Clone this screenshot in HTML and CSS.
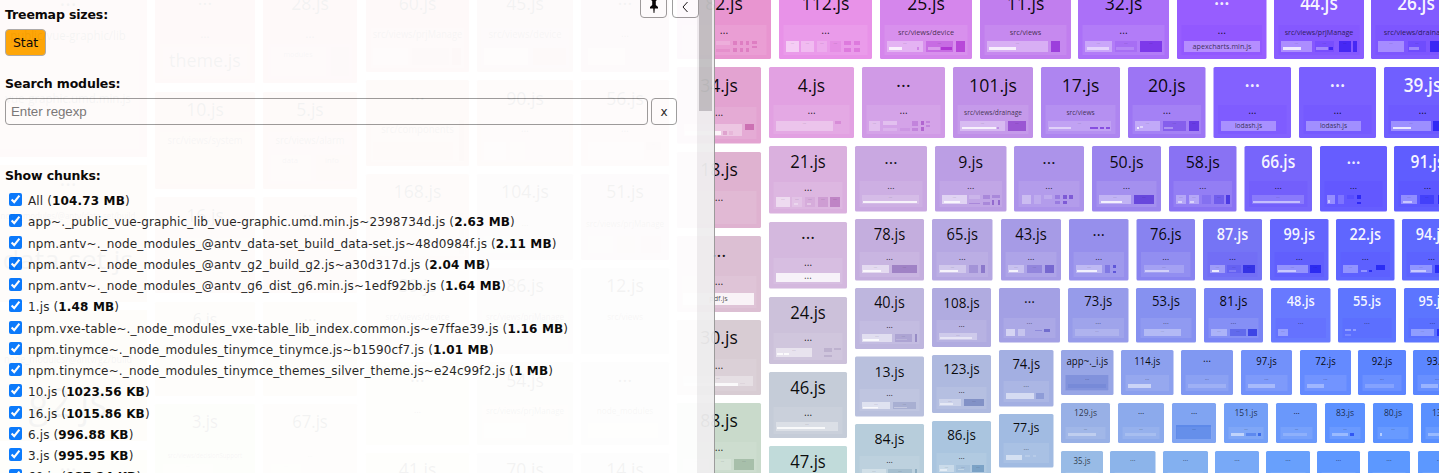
FILE: index.html
```html
<!DOCTYPE html>
<html lang="en">
<head>
<meta charset="utf-8">
<title>Bundle treemap</title>
<link rel="stylesheet" href="styles.css">
</head>
<body>
<svg class="treemap" id="treemap" width="1439" height="473" viewBox="0 0 1439 473"></svg>
<aside class="sidebar">
  <div class="toolbar">
    <button class="btn icon-btn" aria-label="Pin"><svg width="10" height="15" viewBox="0 0 10 15"><path d="M2.4 0h5.2v1.4l-.8.7v4l2.2 2v1.3H5.8L5.4 14h-.8l-.4-4.600H1V8.100l2.200-2v-4l-.8-.7z" fill="#000"/></svg></button>
    <button class="btn icon-btn" aria-label="Hide"><svg width="8" height="12" viewBox="0 0 8 12"><path d="M5.500 1 1 6 5.500 11" fill="none" stroke="#111" stroke-width="1"/></svg></button>
  </div>
  <div class="content">
    <h2 class="heading">Treemap sizes:</h2>
    <button class="btn active">Stat</button>
    <h2 class="heading search-heading">Search modules:</h2>
    <div class="search"><input class="query" type="text" placeholder="Enter regexp"><button class="btn clear">x</button></div>
    <h2 class="heading chunk-heading">Show chunks:</h2>
    <div class="chunks" id="chunks"></div>
  </div>
  <div class="scrollbar"><div class="thumb"></div></div>
</aside>
<script src="app.js"></script>
</body>
</html>
```

FILE: styles.css
```css
body { margin: 0; height: 473px; overflow: hidden; background: #fff; position: relative; }
.treemap { display: block; font-family: "Open Sans", sans-serif; }
.treemap text { text-anchor: middle; }
.sidebar {
  position: absolute; left: 0; top: 0; width: 715px; height: 473px;
  box-sizing: border-box; border-right: 1px solid #999; background: #fff;
  opacity: .95; overflow: hidden; display: flex;
  font: 12px "DejaVu Sans", Verdana, sans-serif; color: #000;
}
.content { flex: 1; padding: 6px 20px 0 5px; min-width: 0; }
.heading { margin: 0; font-size: 12.500px; line-height: 17px; font-weight: bold; letter-spacing: -.14px; }
.btn {
  box-sizing: border-box; height: 27px; padding: 0 7px; border: 1px solid #999;
  border-radius: 4px; background: #fff; font: 12px "DejaVu Sans", Verdana, sans-serif; color: #000;
}
.active { display: block; width: 41px; margin-top: 6px; background: #ffa500; border-color: #aaa; font-size: 12.500px; letter-spacing: -.1px; padding: 0; }
.search-heading { margin-top: 19px; }
.search { display: flex; gap: 3px; margin-top: 6px; }
.query {
  box-sizing: border-box; width: 643px; height: 27px; padding: 0 5px; border: 1px solid #999;
  border-radius: 4px; background: transparent; font: 13.333px "Liberation Sans", Arial, sans-serif; letter-spacing: -.05px;
}
.clear { width: 26px; padding: 0; color: #222; }
.chunk-heading { margin-top: 42px; }
.chunks { display: flex; flex-direction: column; margin-top: 6px; }
.chunk { display: flex; align-items: center; height: 21.250px; padding-left: 4px; white-space: pre; line-height: 16px; letter-spacing: .135px; color: #1c1c1c; }
.chunk input { margin: 0 6px 2px 0; width: 13px; height: 13px; flex: none; }
.chunk span { padding-top: 1px; }
.chunk b { letter-spacing: .15px; color: #000; }
.toolbar { position: absolute; left: 640px; top: -9px; display: flex; gap: 5px; }
.icon-btn { width: 27px; padding: 4px 0 0; display: flex; align-items: center; justify-content: center; }
.scrollbar { width: 17px; background: #efeeef; display: flex; justify-content: center; }
.thumb { width: 13px; height: 111px; background: #c1bfc1; }
```

FILE: app.js
```js
const NS = 'http://www.w3.org/2000/svg';
const svg = document.getElementById('treemap');

function el(name, attrs, content) {
  const node = document.createElementNS(NS, name);
  for (const key in attrs) node.setAttribute(key, attrs[key]);
  if (content) node.textContent = content;
  svg.appendChild(node);
}

function labelWidth(text) {
  let w = 0;
  for (const ch of text) w += /[0-9]/.test(ch) ? .539 : /[.jil\/]/.test(ch) ? .24 : ch === 's' ? .42 : ch === 'm' ? .86 : .53;
  return w;
}

function label(x, y, size, text, fill, opacity) {
  if (!text) return;
  const a = { x, y, 'font-size': size, fill, 'fill-opacity': opacity };
  if (fill === '#fff') a['font-weight'] = 600;
  if (text !== '…') {
    a.textLength = labelWidth(text) * size;
    a.lengthAdjust = 'spacingAndGlyphs';
  }
  el('text', a, text);
}

function accent(color) {
  const c = [1, 3, 5].map(i => parseInt(color.slice(i, i + 2), 16));
  return 'rgb(' + c.map(v => Math.round(Math.max(0, 255 - (255 - v) * 2) * .92)) + ')';
}

const light = { l: .17, m: .32, n: .5, h: .8 };
const dark = { a: .11, b: .27, c: .54 };

// Rows: y1, y2, box top, box bottom, title baseline, title size, group y, group size, cell y, cell height
const R = {
  r1: [-30, 59, 25, 55, 10.3, 19, 33, 11, 41, 11],
  r2: [67, 138, 105, 134, 91.5, 19, 113, 10.5, 121, 10],
  g2: [67, 143.5, 107, 139, 92, 19, 115, 10.5, 124, 12],
  r3: [146, 211.5, 181, 207, 168, 17.2, 188.500, 9.5, 195, 9],
  g3: [152, 228, 191, 224, 175.7, 19, 200, 11, 0, 0],
  h3: [146, 213.5, 182, 209, 168, 18, 190, 10.5, 197, 10],
  r4: [219, 280.5, 252, 277, 239.7, 15.9, 259, 9, 265, 8],
  g4: [236, 312, 276, 308, 262, 19, 284, 11, 293, 12],
  h4: [222, 288.5, 258, 284, 244, 18, 265, 10.5, 273, 9],
  g5: [320, 395, 359, 391, 343.7, 19, 368, 11, 376, 10],
  h5: [297, 364, 333, 360, 319, 18, 340, 10.5, 348, 9],
  g6: [403, 490, 442, 472, 426.7, 19, 450, 11, 459, 11],
  h6: [372, 438, 407, 434, 394, 18, 415, 10.5, 422, 9],
  h7: [446, 510, 480, 500, 468, 18, 0, 0, 0, 0],
  i5: [288, 349, 321, 344, 308, 15.5, 327.500, 8.5, 334, 8],
  i6: [356.5, 416.5, 389, 411, 376.500, 15.2, 395, 8.5, 402, 7],
  i7: [424, 482, 456, 478, 443.7, 15.2, 462.5, 8.5, 469, 7],
  j5: [288, 347, 320, 342, 308.3, 14.5, 326.5, 8, 333, 7],
  j6: [355, 413, 387, 409, 374, 14.5, 392.5, 8, 399, 7],
  j7: [421, 480, 453, 474, 439.7, 14.5, 458, 8, 465, 7],
  k5: [288, 342.5, 318, 338, 306.3, 14.1, 323.5, 7.5, 329, 7],
  k6: [350, 406.5, 381, 402, 369, 14, 386.5, 7.5, 393, 6],
  k7: [414, 467.5, 443, 463, 432.3, 13.4, 449, 7, 455, 5],
  r6: [350, 395, 375, 391, 365, 10.3, 379.5, 5.5, 384, 4],
  r7: [403, 443, 427, 439, 416.3, 9.2, 429.5, 4.5, 433, 3],
  r8: [451, 490, 472, 480, 464, 8.5, 0, 0, 0, 0],
  b1: [-20, 83, 44, 79, 10.3, 19, 37, 12, 47, 29],
  b2: [92, 189, 132, 184, 116, 19, 142, 10, 155, 26],
  b3: [197, 293, 238, 288, 222, 19, 248, 10, 258, 26],
  b4: [302, 396, 342, 391, 325, 17, 354, 9, 362, 24],
  b5: [404, 490, 446, 484, 428, 18, 456, 6.500, 464, 9],
  d1: [-20, 72, 28, 68, 10.3, 19, 36, 10.300, 48, 17],
  d2: [80, 166, 120, 162, 104.5, 19, 131, 10, 142, 18],
  d3: [174, 260, 215, 256, 198, 19, 225, 9, 236, 17],
  d4: [268, 354, 310, 350, 292, 19, 318, 9, 330, 17],
  d5: [362, 445, 405, 440, 387, 19, 412, 9, 423, 15],
  d6: [453, 520, 490, 500, 476, 19, 0, 0, 0, 0]
};

const C = '…';
// Tile: row, x1, x2, colour, title, group, cells [x, width, tone, y?, height?], white title?
const tiles = [
  ['b1', 155, 255, '#f0948f', C, C, [[163, 84, 'l', 47, 29]]], ['b1', 263, 357, '#ee8f98', '28.js', C, [[271, 55, 'l'], [331, 18, 'a']]],
  ['b2', 155, 255, '#f4ac92', '10.js', 'src/views/system', []], ['b2', 263, 357, '#f2a598', '5.js', 'src/views/alarm', [[271, 40, 'l'], [316, 34, 'a']]],
  ['b3', 155, 255, '#f5c1a2', '16.js', 'src/views', []], ['b3', 263, 357, '#f0bca2', C, C, []],
  ['b4', 155, 255, '#eee2b4', '6.js', C, []], ['b4', 263, 357, '#efe2be', C, C, []],
  ['b5', 155, 255, '#e9edbe', '3.js', 'src/views/decisionSupport', [[163, 50, 'l']]], ['b5', 263, 357, '#eeeac8', '67.js', C, [[271, 30, 'l']]],
  ['d1', 366, 469, '#ee9798', '60.js', 'src/views/prjManage', [[373, 35, 'm'], [412, 37, 'a'], [452, 9, 'b']]],
  ['d1', 477, 573, '#eaa0af', '45.js', 'src/views/device', [[484, 44, 'm'], [533, 33, 'b']]],
  ['d1', 581, 669, '#eaa2b7', C, C, [[588, 37, 'm'], [630, 33, 'a']]],
  ['d2', 366, 469, '#f0aa96', C, 'src/components', [[373, 80, 'a'], [459, 5, 'b', 120, 41]]],
  ['d2', 477, 573, '#ecb4ae', '90.js', C, [[484, 22, 'm'], [510, 15, 'l']]],
  ['d2', 581, 669, '#ecb2ba', '56.js', C, [[588, 56, 'm'], [646, 15, 'b', 142, 8]]],
  ['d3', 366, 469, '#f0c3b0', '168.js', C, [[373, 60, 'l'], [459, 5, 'b', 213, 41]]],
  ['d3', 477, 573, '#e5cfc4', '104.js', C, [[484, 35, 'l']]],
  ['d3', 581, 669, '#e5bec4', '51.js', 'src/views/prjManage', [[588, 25, 'l'], [617, 18, 'a'], [641, 20, 'b']]],
  ['d4', 366, 469, '#eed8c6', '39.js', 'src/views/device', []], ['d4', 477, 573, '#e4d6ca', '86.js', 'src/views/prjManage', [[484, 22, 'l']]], ['d4', 581, 669, '#e6dada', '12.js', 'src/views', []],
  ['d5', 366, 469, '#f3efcc', C, C, []], ['d5', 477, 573, '#ebe6d2', '54.js', 'src/views/prjManage', [[484, 42, 'm']]], ['d5', 581, 669, '#eae6dc', C, 'node_modules', [[588, 70, 'm']]],
  ['d6', 366, 469, '#edf0ce', '41.js'], ['d6', 477, 573, '#e8e6d8', '70.js'], ['d6', 581, 669, '#e6e6de', '14.js'],

  ['r1', 677, 771, '#e895d0', '82.js', C, [[716, 14, 'l', 41, 4], [716, 14, 'a', 49, 3], [733, 4, 'b', 41, 4], [740, 3, 'b', 41, 4], [746, 3, 'b', 41, 4], [752, 5, 'b', 41, 3], [733, 4, 'b', 48, 4], [740, 3, 'b', 48, 4], [746, 3, 'b', 48, 4], [752, 5, 'b', 46, 2]]],
  ['r1', 779, 872, '#e892e8', '112.js', C, [[786, 13, 'n'], [801, 13, 'm'], [817, 10, 'l'], [830, 11, 'a'], [844, 7, 'b', 41, 4], [854, 6, 'b', 41, 4], [844, 7, 'b', 48, 4], [854, 6, 'b', 48, 4]]],
  ['r1', 880, 972, '#d586ec', '25.js', 'src/views/device', [[887, 36, 'm'], [889, 13, 'h', 47, 3], [917, 2, 'b', 47, 3], [926, 27, 'b'], [928, 12, 'm', 47, 3], [941, 11, 'c', 47, 3], [956, 9, 'c']]],
  ['r1', 980, 1071, '#c17eee', '11.js', 'src/views', [[987, 61, 'm'], [989, 27, 'h', 47, 3], [1051, 9, 'c']]],
  ['r1', 1078, 1169, '#ab70f8', '32.js', C, [[1085, 27, 'm'], [1087, 22, 'n', 47, 3], [1115, 22, 'a'], [1116, 18, 'l', 47, 3], [1140, 22, 'c']]],
  ['r1', 1177, 1266.5, '#975dff', C, C, [[1184, 76, 'm', 41, 11, 'apexcharts.min.js']], 1],
  ['r1', 1274, 1364, '#895dff', '44.js', 'src/views/prjManage', [[1281, 31, 'm'], [1283, 18, 'h', 47, 3], [1315, 19, 'a'], [1316, 12, 'm', 47, 3], [1329, 4, 'c', 47, 3], [1339, 12, 'c'], [1353, 4, 'c']], 1],
  ['r1', 1371, 1461, '#815bff', '26.js', 'src/views/drainage', [[1378, 26, 'm'], [1408, 18, 'a'], [1409, 10, 'm', 47, 3], [1430, 9, 'c']], 1],
  ['g2', 677, 761, '#e3a3d1', '34.js', C, [[684, 58, 'm'], [685, 36, 'h', 131, 4], [723, 4, 'b', 131, 4], [729, 4, 'a', 131, 4], [745, 9, 'c', 124, 6]]],
  ['r2', 769, 854, '#e2a1e2', '4.js', C, [[776, 57, 'm'], [835, 6, 'b', 121, 3]]],
  ['r2', 862, 945, '#d09ae6', C, C, [[869, 11, 'm'], [883, 14, 'm', 121, 4], [883, 14, 'l', 128, 3], [900, 10, 'a', 128, 3], [912, 6, 'b', 121, 5], [912, 6, 'b', 128, 3], [921, 3, 'c', 121, 4], [921, 3, 'c', 127, 4], [926, 4, 'b', 121, 2], [926, 4, 'b', 125, 2]]],
  ['r2', 953, 1033, '#c090e8', '101.js', 'src/views/drainage', [[960, 45, 'm'], [962, 34, 'h', 127, 2], [997, 2, 'b', 127, 2], [1008, 18, 'c']]],
  ['r2', 1041, 1120, '#ae85f0', '17.js', 'src/views', [[1048, 63, 'l'], [1049, 22, 'n', 127, 2], [1090, 8, 'c', 127, 2], [1100, 4, 'c', 127, 2], [1106, 4, 'c', 127, 2]]],
  ['r2', 1128, 1205.5, '#9c75f4', '20.js', C, [[1135, 25, 'm'], [1137, 2, 'h', 127, 2], [1140, 3, 'n', 126, 2], [1163, 23, 'b'], [1164, 9, 'm', 127, 2], [1189, 10, 'c']]],
  ['r2', 1213.5, 1291, '#8361ff', C, C, [[1221, 55, 'm', 121, 10, 'lodash.js']], 1],
  ['r2', 1299, 1376, '#795fff', C, C, [[1306, 55, 'm', 121, 10, 'lodash.js']], 1],
  ['r2', 1384, 1461, '#705fff', '39.js', C, [[1391, 40, 'm'], [1393, 18, 'h', 127, 2], [1433, 9, 'c']], 1],
  ['g3', 677, 761, '#dfb2d0', '18.js', C, []],
  ['h3', 769, 847, '#dab0de', '21.js', C, [[776, 14, 'n'], [792, 10, 'l'], [794, 4, 'm', 203, 2], [805, 10, 'a'], [807, 4, 'm', 203, 2], [818, 10, 'b'], [830, 10, 'c']]],
  ['r3', 855, 927, '#c9a8e1', C, C, [[862, 57, 'l'], [863, 54, 'h', 201, 2]]],
  ['r3', 935, 1006.5, '#bb9ee4', '9.js', C, [[942, 25, 'n'], [944, 16, 'h', 201, 2], [969, 11, 'l', 195, 4], [969, 11, 'b', 203, 1], [983, 7, 'b', 195, 4], [983, 7, 'b', 202, 3], [992, 8, 'b', 195, 3], [992, 2, 'c', 200, 5], [998, 2, 'c', 200, 5]]],
  ['r3', 1014, 1084, '#ac93ea', C, C, [[1022, 9, 'm'], [1034, 7, 'l'], [1044, 8, 'l', 195, 4], [1055, 5, 'b', 195, 4], [1063, 4, 'c', 195, 4], [1069, 4, 'c', 195, 4], [1055, 5, 'b', 201, 3], [1063, 4, 'c', 201, 3]]],
  ['r3', 1092, 1161, '#9b85ee', '50.js', C, [[1099, 32, 'm'], [1101, 21, 'h', 201, 2], [1134, 20, 'c']]],
  ['r3', 1169, 1236.5, '#8972f3', '58.js', C, [[1176, 10, 'm'], [1178, 4, 'n', 201, 2], [1189, 10, 'm'], [1190, 4, 'n', 201, 2], [1202, 9, 'a'], [1214, 10, 'b'], [1226, 4, 'c']]],
  ['r3', 1244.5, 1312, '#7765fb', '66.js', C, [[1252, 52, 'l'], [1253, 47, 'n', 201, 2]], 1],
  ['r3', 1320, 1387, '#665dff', C, C, [[1327, 8, 'm'], [1328, 2, 'n', 200, 3], [1338, 6, 'l'], [1347, 7, 'a', 195, 4], [1357, 4, 'c', 195, 4], [1357, 4, 'c', 202, 2]], 1],
  ['r3', 1394, 1461, '#5f5dff', '91.js', C, [[1401, 16, 'm'], [1403, 9, 'n', 201, 2], [1420, 14, 'b'], [1438, 5, 'c']], 1],
  ['g4', 677, 761, '#dcbfd3', C, C, [[683, 71, 'h', 293, 12, 'pdf.js']]],
  ['h4', 769, 847, '#d4b8de', C, C, [[776, 64, 'h', 273, 9, C]]],
  ['r4', 855, 924, '#c4aede', '78.js', C, [[862, 27, 'n'], [863, 18, 'h', 270, 2], [892, 25, 'c']]],
  ['r4', 932, 992.5, '#b5a7e2', '65.js', C, [[939, 27, 'm'], [940, 18, 'h', 270, 2], [969, 9, 'b'], [981, 4, 'c']]],
  ['r4', 1001, 1061, '#a69be6', '43.js', C, [[1008, 16, 'm'], [1009, 9, 'h', 270, 2], [1027, 15, 'b'], [1045, 9, 'c']]],
  ['r4', 1069, 1128.5, '#968fec', C, C, [[1076, 26, 'm'], [1077, 20, 'h', 270, 2], [1105, 5, 'b'], [1113, 3, 'c', 265, 3], [1113, 3, 'c', 271, 2]]],
  ['r4', 1136.5, 1195, '#8883f0', '76.js', C, [[1144, 40, 'l'], [1145, 24, 'n', 270, 2]]],
  ['r4', 1203, 1262, '#7574f5', '87.js', C, [[1210, 15, 'm'], [1212, 7, 'h', 270, 2], [1227, 14, 'a'], [1229, 7, 'l', 270, 2], [1243, 12, 'c']], 1],
  ['r4', 1270, 1328.5, '#6465fd', '99.js', C, [[1277, 31, 'm'], [1278, 18, 'n', 270, 2], [1310, 11, 'c']], 1],
  ['r4', 1336, 1394.5, '#5f66ff', '22.js', C, [[1343, 15, 'm'], [1361, 6, 'm', 270, 2], [1369, 3, 'c', 270, 2], [1376, 9, 'c', 265, 5]], 1],
  ['r4', 1402, 1461, '#5e69ff', '94.js', C, [[1410, 22, 'm'], [1411, 15, 'n', 270, 2], [1435, 4, 'c']], 1],
  ['g5', 677, 761, '#d8ccd3', '30.js', C, [[683, 70, 'm'], [684, 54, 'h', 383, 3], [740, 5, 'a', 383, 1]]],
  ['h5', 769, 847, '#ccc1da', '24.js', C, [[776, 36, 'n'], [777, 6, 'h', 353, 2], [784, 5, 'h', 353, 2], [824, 8, 'b', 348, 4], [834, 7, 'b', 348, 2], [824, 8, 'b', 355, 2]]],
  ['i5', 855, 924, '#beb6de', '40.js', C, [[862, 30, 'n'], [863, 16, 'h', 339, 2], [895, 17, 'b'], [896, 11, 'l', 339, 1], [915, 2, 'c']]],
  ['j5', 932, 991, '#b0abe0', '108.js', C, [[939, 38, 'm'], [940, 32, 'n', 337, 2]]],
  ['k5', 999, 1060, '#a3a0e4', C, C, [[1006, 9, 'n'], [1018, 7, 'm'], [1035, 7, 'b', 330, 1], [1044, 6, 'c', 329, 3]]],
  ['k5', 1068, 1128.5, '#969bea', '73.js', C, [[1075, 44, 'l']]],
  ['k5', 1136, 1196, '#8691f0', '53.js', C, [[1144, 37, 'm']]],
  ['k5', 1204, 1263, '#7984f5', '81.js', C, [[1211, 16, 'm'], [1230, 16, 'b'], [1248, 9, 'c']]],
  ['k5', 1271, 1330.5, '#6879ff', '48.js', C, [[1278, 10, 'm']], 1],
  ['k5', 1338, 1396, '#5e75ff', '55.js', C, [[1345, 6, 'm', 329, 2], [1353, 3, 'm', 329, 2], [1345, 6, 'l', 334, 2]], 1],
  ['k5', 1404, 1461, '#5c75ff', '95.js', C, [[1411, 23, 'm'], [1437, 4, 'c']], 1],
  ['g6', 677, 761, '#c9dacb', '88.js', C, [[683, 26, 'm'], [714, 17, 'l'], [734, 20, 'c']]],
  ['h6', 769, 847, '#c5ccd8', '46.js', C, [[776, 62, 'm'], [777, 48, 'h', 427, 2]]],
  ['h7', 769, 847, '#c1dbda', '47.js'],
  ['i6', 855, 924, '#b9c0dd', '13.js', C, [[862, 28, 'n'], [863, 15, 'h', 407, 1.5], [893, 23, 'b'], [894, 13, 'm', 407, 1]]],
  ['i7', 855, 924, '#b7cddb', '84.js', C, [[862, 24, 'm'], [888, 24, 'b'], [915, 2, 'c']]],
  ['j6', 932, 991, '#aeb9df', '123.js', C, [[939, 22, 'm'], [940, 13, 'n', 403, 2], [964, 20, 'c']]],
  ['j7', 932, 991, '#aac5df', '86.js', C, [[939, 15, 'm'], [940, 7, 'n', 469, 2], [956, 14, 'a'], [958, 6, 'm', 469, 1], [972, 12, 'c']]],
  ['k6', 999, 1053.5, '#a3afe2', '74.js', C, [[1006, 28, 'n'], [1036, 8, 'b']]],
  ['k7', 999, 1053.5, '#a1bbe2', '77.js', C, [[1006, 16, 'n'], [1025, 5, 'l', 455, 2], [1033, 3, 'l', 455, 2]]],
  ['r6', 1061, 1113.5, '#98a6e6', 'app~._i.js', C, [[1065.5, 43, 'b', 375, 15.5], [1068, 38, 'a', 384, 4]]],
  ['r6', 1121, 1173.5, '#8ca0ee', '114.js', C, [[1128, 23, 'n']]],
  ['r6', 1181, 1233, '#8098f2', C, C, [[1188, 38, 'l']]],
  ['r6', 1241, 1292, '#7291fa', '97.js', C, [[1248, 27, 'm']]],
  ['r6', 1300, 1351, '#648aff', '72.js', C, [[1307, 17, 'm']]],
  ['r6', 1358, 1406, '#5d85ff', '92.js', C, [[1365, 29, 'l']]],
  ['r6', 1413, 1461, '#5b86ff', '93.js', C, [[1421, 17, 'm']]],
  ['r7', 1061, 1110, '#98b0e6', '129.js', C, [[1068, 28, 'm']]],
  ['r7', 1118, 1164, '#8caaec', C, C, [[1125, 31, 'l']]],
  ['r7', 1172, 1216, '#80a4f2', C, C, [[1176, 35, 'b', 425, 14]]],
  ['r7', 1224, 1268, '#749ff7', '151.js', C, [[1231, 13, 'n'], [1246, 10, 'b'], [1258, 3, 'c']]],
  ['r7', 1276, 1317, '#6a98fb', C, C, [[1283, 24, 'l']]],
  ['r7', 1325, 1365, '#5d91ff', '83.js', C, [[1332, 16, 'm'], [1350, 4, 'c']]],
  ['r7', 1373, 1413, '#5a90ff', '80.js', C, [[1380, 2, 'n']]],
  ['r7', 1421, 1461, '#5a90ff', '13.js', C, [[1428, 14, 'm']]],
  ['r8', 1061, 1103, '#98bbe6', '35.js'], ['r8', 1110, 1155.500, '#8cb4ea', C], ['r8', 1163, 1208, '#83b0f0', C], ['r8', 1215, 1259, '#78a9f7', C],
  ['r8', 1266, 1310, '#68a0fc', C], ['r8', 1317, 1360, '#5f98ff', C], ['r8', 1368, 1410, '#5c98ff', C], ['r8', 1418, 1461, '#5c98ff', C]
];

for (const [row, x1, x2, color, title, group, cells = [], white] of tiles) {
  const [y1, y2, by1, by2, base, size, gy, gs, cy, ch] = R[row];
  const mid = (x1 + x2) / 2;
  const ink = white ? '#fff' : '#000';
  el('rect', { x: x1, y: y1, width: x2 - x1, height: y2 - y1, rx: 1.5, fill: color });
  el('rect', { x: x1 + 4.5, y: by1, width: x2 - x1 - 9, height: by2 - by1, fill: white ? '#40f' : '#fff', 'fill-opacity': white ? .05 : .09 });
  if (title === C) label(mid, row === 'r8' ? 460.500 : base - size * .26, row === 'r8' ? 7 : row === 'r7' ? 8 : size, C, ink, row === 'r8' ? .6 : .9);
  else label(mid, base, size, title, ink, size < 10 ? .72 : .95);
  if (group) {
    if (group === C) label(mid, gy + .8, gs, C, '#000', gs < 8 ? .5 : .85);
    else label(mid, gy + 2, row === 'r1' ? 7.9 : Math.min(gs, row === 'r2' ? 7.100 : 10.3), group, '#000', .7);
  }
  for (const [x, w, tone, y = cy, h = ch, text] of cells) {
    el('rect', { x, y, width: w, height: h, fill: tone in light ? '#fff' : accent(color), 'fill-opacity': light[tone] || dark[tone] });
    if (text) label(x + w / 2, text === C ? y + 5.500 : y + h / 2 + 2.3, text === C ? 10 : 7.4, text, '#000', .7);
    else if (w > 9 && h > 6 && h < 14) label(x + w / 2, y + 3, 5, C, '#000', .3);
  }
}
label(205, 67, 18.500, 'theme.js', '#000', .85);
label(298, 57, 8, 'modules', '#000', .6);
label(290, 163, 7.500, 'data', '#000', .6);
label(332, 163, 7.500, 'info', '#000', .6);

// Large tiles in the first column.
[[-10, 157], [165, 302], [310, 441], [450, 500]].forEach(([a, b], i) => {
  el('rect', { x: -10, y: a, width: 157, height: b - a, fill: ['#f3b0a2', '#f8c7a0', '#f8dfb0', '#efecb8'][i] });
});
el('rect', { x: -4, y: 50, width: 143, height: 99, fill: '#fff', 'fill-opacity': .15 });
[[6, 22, C], [40, 12, 'public/vue-graphic/lib'], [103, 12, 'vue-graphic.umd.min.js'], [186, 22, C], [219, 8.5, 'node_modules/@antv/data-set/build'],
 [269, 26, 'data-set.js'], [363, 10, 'node_modules/@antv/g2/build'], [417, 40, 'g2.js'], [471, 22, C]].forEach(([y, s, t]) => label(68, y, s, t, '#000', .8));

const chunks = [
  ['All', '104.73 MB'],
  ['app~._public_vue-graphic_lib_vue-graphic.umd.min.js~2398734d.js', '2.63 MB'],
  ['npm.antv~._node_modules_@antv_data-set_build_data-set.js~48d0984f.js', '2.11 MB'],
  ['npm.antv~._node_modules_@antv_g2_build_g2.js~a30d317d.js', '2.04 MB'],
  ['npm.antv~._node_modules_@antv_g6_dist_g6.min.js~1edf92bb.js', '1.64 MB'],
  ['1.js', '1.48 MB'],
  ['npm.vxe-table~._node_modules_vxe-table_lib_index.common.js~e7ffae39.js', '1.16 MB'],
  ['npm.tinymce~._node_modules_tinymce_tinymce.js~b1590cf7.js', '1.01 MB'],
  ['npm.tinymce~._node_modules_tinymce_themes_silver_theme.js~e24c99f2.js', '1 MB'],
  ['10.js', '1023.56 KB'], ['16.js', '1015.86 KB'], ['6.js', '996.88 KB'], ['3.js', '995.95 KB'], ['60.js', '987.24 KB']
];
document.getElementById('chunks').innerHTML = chunks.map(([name, size]) =>
  `<label class="chunk"><input type="checkbox" checked><span>${name} (<b>${size}</b>)</span></label>`).join('');
```
